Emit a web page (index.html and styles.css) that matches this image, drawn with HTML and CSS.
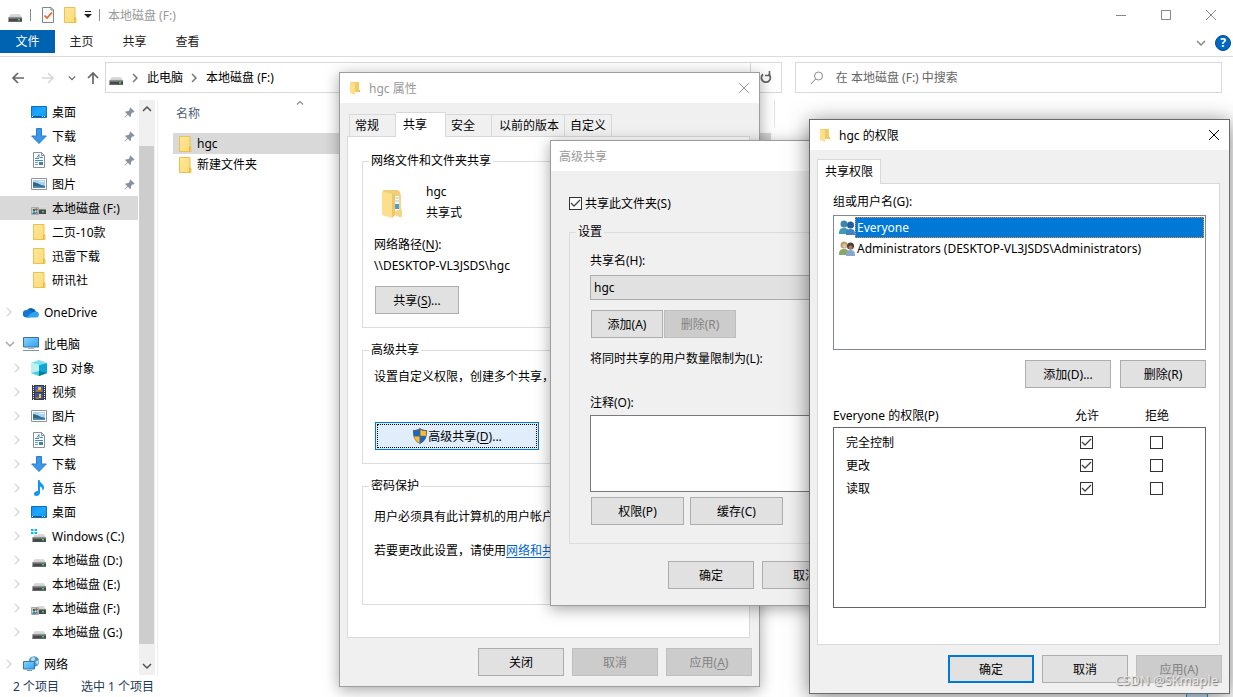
FILE: index.html
```html
<!DOCTYPE html>
<html lang="zh-CN">
<head>
<meta charset="utf-8">
<title>本地磁盘 (F:)</title>
<link rel="stylesheet" href="styles.css">
</head>
<body>
<svg class="sprite" aria-hidden="true">
  <defs>
    <linearGradient id="g-folder" x1="0" y1="0" x2="1" y2="1"><stop offset="0" stop-color="#ffe79b"/><stop offset="1" stop-color="#fbdb76"/></linearGradient>
    <linearGradient id="g-blue" x1="0" y1="0" x2="1" y2="1"><stop offset="0" stop-color="#0a93f5"/><stop offset=".5" stop-color="#22a7ff"/><stop offset="1" stop-color="#0f97f8"/></linearGradient>
    <linearGradient id="g-pc" x1="0" y1="0" x2="1" y2="1"><stop offset="0" stop-color="#8fd3fb"/><stop offset="1" stop-color="#2ba3f2"/></linearGradient>
    <linearGradient id="g-drive" x1="0" y1="0" x2="0" y2="1"><stop offset="0" stop-color="#dfe0e1"/><stop offset="1" stop-color="#c4c6c8"/></linearGradient>
  </defs>
  <symbol id="folder" viewBox="0 0 16 16"><path d="M2.500.5h10.500v11h1v4H2.500z" fill="url(#g-folder)" stroke="#e8c14e"/><path d="M12.500 15.500v-4.500h1.500" fill="none" stroke="#e8b93c"/></symbol>
  <symbol id="folder-open" viewBox="0 0 12 14"><path d="M1 1h9v10H1z" fill="#f3cc68"/><path d="M1 1l5 1.500V14l-5-2z" fill="#ffe08a"/><path d="M7 11h4v-2h-1v2z" fill="#eebb4d"/></symbol>
  <symbol id="folder-big" viewBox="0 0 22 30"><path d="M2 1h15l2 2v23H2z" fill="#efcf77"/><path d="M13 7h6v15h-6z" fill="#f3f6f8"/><path d="M14 9h4M14 12h4" stroke="#b7cddb"/><path d="M14 15h4v5h-4z" fill="#4d9ed8"/><path d="M1 2l10 3v24L1 26z" fill="#fbdf8c"/><path d="M11 5l3 1v20l-3 3z" fill="#ecc763"/><path d="M14 22l4-1V5h2v15l1 1v7h-3l-4-2z" fill="#f5d783"/></symbol>
  <symbol id="drive" viewBox="0 0 16 16"><path d="M3.500 7h9.500l2 4H1.500z" fill="url(#g-drive)"/><path d="M1.500 10.500H15V15H1.500z" fill="#47494c"/><path d="M1.500 10.500H15v1H1.500z" fill="#95979a"/><path d="M1.500 14H15v1H1.500z" fill="#66696b"/><path d="M11 12h2v1.500h-2z" fill="#2fe04a"/></symbol>
  <symbol id="drive-win" viewBox="0 0 16 16"><path d="M4 6h9l2 4H2z" fill="url(#g-drive)"/><path d="M1.500 9.500H15V14H1.500z" fill="#47494c"/><path d="M1.500 9.500H15v1H1.500z" fill="#95979a"/><path d="M11 11h2v1.500h-2z" fill="#2fe04a"/><path d="M0 0h7v7H0z" fill="#fff"/><path d="M0 1h2.500v2H0zM3.500 1H6v2H3.500zM0 4h2.500v2H0zM3.500 4H6v2H3.500z" fill="#00bcf2"/></symbol>
  <symbol id="drive-share" viewBox="0 0 16 16"><path d="M7 6h6l2 4H7z" fill="url(#g-drive)"/><path d="M7 9.500h8V14H7z" fill="#47494c"/><path d="M11 11h2v1.500h-2z" fill="#2fe04a"/><path d="M.5 7.500h7v7h-7z" fill="#cfd6d5" stroke="#a4aaaa"/><circle cx="3" cy="10" r="1.300" fill="#356b4a"/><circle cx="5.500" cy="9.500" r="1.200" fill="#8a5a43"/><path d="M1 14l2-3 2 3zM4 13l2-2 1 3z" fill="#3d7b95"/></symbol>
  <symbol id="desktop" viewBox="0 0 16 16"><path d="M.5 2.500h15v11H.5z" fill="url(#g-blue)" stroke="#0b73bd"/><path d="M1 12h14v1H1z" fill="#0a5d9c"/><path d="M1 12h1v1H1zM11 12h1v1h-1zM13 12h1v1h-1z" fill="#fff"/></symbol>
  <symbol id="download" viewBox="0 0 16 16"><path d="M5.500.5h5v7.500h4.800L8 15.500.7 8h4.800z" fill="#3a96e8" stroke="#2b7cc9"/></symbol>
  <symbol id="document" viewBox="0 0 16 16"><path d="M2.500.5h8l3 3v12h-11z" fill="#fff" stroke="#8b8f93"/><path d="M10.500.5v3h3" fill="none" stroke="#8b8f93"/><path d="M6 5.500l2-3v3.500M4 6.500h4M9 5.500h3M4 8.500h8" stroke="#3b8fc8" fill="none"/><path d="M4 10.500h3M4 12.500h3" stroke="#7ba0bb"/><path d="M8 10h4v3H8z" fill="#3e86a8"/></symbol>
  <symbol id="picture" viewBox="0 0 16 16"><path d="M.5 2.500h15v11H.5z" fill="#fff" stroke="#8f9498"/><path d="M2 4h12v8H2z" fill="#a8d3f6"/><path d="M2 6l4 1 4 2 4 1v2H2z" fill="#35677a"/><path d="M2 10l6 .5 6 .5v1H2z" fill="#4d8fc4"/><path d="M8 5h5v1H8z" fill="#edf7ff"/></symbol>
  <symbol id="video" viewBox="0 0 16 16"><path d="M1 1h14v15H1z" fill="#3b3b3f"/><path d="M4 2h8v6H4z" fill="#3e63c4"/><path d="M4 9h8v6H4z" fill="#3157b4"/><path d="M7 3h3v3H7zM8 10h2v4H8z" fill="#f2c72d"/><path d="M5 6h6v2H5zM5 13h3v2H5z" fill="#a8732e"/><path d="M2.500 1v15M13.500 1v15" stroke="#f2f2f2" stroke-dasharray="1 1"/></symbol>
  <symbol id="music" viewBox="0 0 16 16"><path d="M7 0h1.500c.3 3 4.500 4 4.500 7.500 0 1.500-.7 2.500-1.500 3.500.3-2.500-.6-4-2.500-4.500v6c0 2-1.600 3.500-3.700 3.500C3.700 16 3 15 3 14c0-1.700 1.800-3.200 4-3z" fill="#1296f0"/></symbol>
  <symbol id="cube" viewBox="0 0 16 16"><path d="M8 0l8 3-8 2-8-2z" fill="#7be0ee"/><path d="M0 3l8 2v11l-8-3z" fill="#c0eff4"/><path d="M16 3L8 5v11l8-3z" fill="#08a9d6"/><path d="M0 13l8-2v5z" fill="#49cfe0"/><path d="M8 11l8 2-8 3z" fill="#077a9d"/></symbol>
  <symbol id="cloud" viewBox="0 0 16 16"><path d="M4 6.500A5 5 0 0 1 13 7.500L9 11z" fill="#0f63b5"/><path d="M3.500 13.500a3.500 3.500 0 0 1 0-7.500c2-.4 3.500 0 5 1.500l3 3-5 3z" fill="#1277d4"/><path d="M12.800 7.500a3 3 0 0 1 .2 6H3.500C6 11 9.500 7.500 12.800 7.500z" fill="#2ca5ec"/></symbol>
  <symbol id="pc" viewBox="0 0 16 16"><path d="M.5 1.500h15v9.500H.5z" fill="url(#g-pc)" stroke="#3a7196"/><path d="M5 12h6v1H5z" fill="#a7b7c2"/><path d="M0 14.500h16" stroke="#7b97a9"/></symbol>
  <symbol id="network" viewBox="0 0 16 16"><circle cx="11" cy="5.500" r="5.300" fill="#5497c2"/><path d="M8 3c2-3 4-2 4 0s-2 1-1 3-3 2-3-3zM12 6l4-2-1 5z" fill="#b9dced"/><path d="M.5 5.500h11V13H.5z" fill="url(#g-pc)" stroke="#347aa6"/><path d="M4 14.500h5" stroke="#7b97a9"/></symbol>
  <symbol id="pin" viewBox="0 0 12 12"><path d="M7 .5L11.500 5l-1 1-1-.2-2 2 .2 2.200-1 1-2.500-2.500L1 11.500.5 11l3-3.200L1.200 5.500l1-1 2.200.2 2-2L6 1.500z" fill="#8793a0"/></symbol>
  <symbol id="chev-right" viewBox="0 0 8 10"><path d="M2 1l4 4-4 4" fill="none" stroke="currentColor" stroke-width="1.500"/></symbol>
  <symbol id="chev-down" viewBox="0 0 10 8"><path d="M1 2l4 4 4-4" fill="none" stroke="currentColor" stroke-width="1.500"/></symbol>
  <symbol id="chev-up" viewBox="0 0 10 8"><path d="M1 6l4-4 4 4" fill="none" stroke="currentColor" stroke-width="1.500"/></symbol>
  <symbol id="arrow" viewBox="0 0 14 14"><path d="M13 7H2M7 2L2 7l5 5" fill="none" stroke="currentColor" stroke-width="1.700"/></symbol>
  <symbol id="close" viewBox="0 0 12 12"><path d="M1 1l10 10M11 1L1 11" fill="none" stroke="currentColor"/></symbol>
  <symbol id="shield" viewBox="0 0 16 16"><path d="M8 0c2 1.500 4 2 7 2 .3 6-1 11-7 14C2 13 .7 8 1 2c3 0 5-.5 7-2z" fill="#5d6468"/><path d="M7.500 1.700v6H2V3c2.500 0 4-.5 5.500-1.300zM8.500 8.500H14c-.6 3-2.500 5-5.500 6.500z" fill="#1668c7"/><path d="M8.500 1.700v6H14V3c-2.500 0-4-.5-5.500-1.300zM7.500 8.500H2c.6 3 2.500 5 5.500 6.500z" fill="#fbbc35"/></symbol>
  <symbol id="group-blue" viewBox="0 0 16 16"><circle cx="5" cy="4" r="3.500" fill="#3a87ae"/><path d="M0 14c0-4 1-6 5-6s5 2 5 6z" fill="#3f9ab0"/><circle cx="11.500" cy="5" r="3.500" fill="#245f9c"/><path d="M7 15c0-4 1-6 4.500-6s4.500 2 4.500 6z" fill="#3b82c7"/></symbol>
  <symbol id="group" viewBox="0 0 16 16"><circle cx="5" cy="4" r="3.500" fill="#b9a26d"/><circle cx="5.500" cy="5" r="2" fill="#e4c6a0"/><path d="M0 14c0-4 1-6 5-6s5 2 5 6z" fill="#86a86c"/><circle cx="11.500" cy="5" r="3.500" fill="#4a3f3a"/><circle cx="11.500" cy="6.500" r="2" fill="#a87b5f"/><path d="M7 15c0-4 1-6 4.500-6s4.500 2 4.500 6z" fill="#8ba7cc"/></symbol>
</svg>

<main class="explorer">
  <header class="titlebar">
    <svg class="icon"><use href="#drive"/></svg>
    <span class="bar"></span>
    <svg class="icon check-doc" viewBox="0 0 16 16"><path d="M2.500.5h8.500l2.500 2.500v12.500h-11z" fill="#f7f8f8" stroke="#838689"/><path d="M11 .5V3h2.500" fill="none" stroke="#838689"/><path d="M4.500 8.500l2.500 2.500 5-5.500" fill="none" stroke="#e8622a" stroke-width="1.700"/></svg>
    <svg class="icon"><use href="#folder"/></svg>
    <svg class="qat-more" viewBox="0 0 8 8"><path d="M1 .5h6" stroke="#222"/><path d="M0 3h8L4 7z" fill="#222"/></svg>
    <span class="bar"></span>
    <h1 class="window-title">本地磁盘 (F:)</h1>
    <div class="window-buttons">
      <button class="window-button" aria-label="最小化"><svg viewBox="0 0 12 12"><path d="M1 6.500h10" stroke="currentColor"/></svg></button>
      <button class="window-button" aria-label="最大化"><svg viewBox="0 0 12 12"><path d="M1.500 1.500h9v9h-9z" fill="none" stroke="currentColor"/></svg></button>
      <button class="window-button" aria-label="关闭"><svg><use href="#close"/></svg></button>
    </div>
  </header>

  <nav class="ribbon" aria-label="功能区">
    <button class="ribbon-tab ribbon-file">文件</button>
    <button class="ribbon-tab">主页</button>
    <button class="ribbon-tab">共享</button>
    <button class="ribbon-tab">查看</button>
    <div class="ribbon-end">
      <svg class="chev-down"><use href="#chev-down"/></svg>
      <button class="help" aria-label="帮助">?</button>
    </div>
  </nav>

  <div class="toolbar">
    <div class="history">
      <button class="plain" aria-label="后退"><svg class="arrow"><use href="#arrow"/></svg></button>
      <button class="plain faint" aria-label="前进"><svg class="arrow flip"><use href="#arrow"/></svg></button>
      <button class="plain" aria-label="最近"><svg class="recent"><use href="#chev-down"/></svg></button>
      <button class="plain" aria-label="上移"><svg class="arrow up"><use href="#arrow"/></svg></button>
    </div>
    <div class="address">
      <svg class="icon"><use href="#drive"/></svg>
      <svg class="crumb-sep"><use href="#chev-right"/></svg>
      <button class="plain crumb">此电脑</button>
      <svg class="crumb-sep"><use href="#chev-right"/></svg>
      <button class="plain crumb">本地磁盘 (F:)</button>
      <button class="plain refresh" aria-label="刷新"><svg viewBox="0 0 14 14"><path d="M4 3.200A4.500 4.500 0 1 0 9.500 3" fill="none" stroke="#666" stroke-width="1.800"/><path d="M3.500 0v4.500H8" fill="none" stroke="#666" stroke-width="1.600" transform="matrix(-1 0 0 1 13 0) translate(-1 0)"/></svg></button>
    </div>
    <label class="search">
      <svg viewBox="0 0 14 14"><circle cx="8.500" cy="5" r="4" fill="none" stroke="#888"/><path d="M5.500 8L1 13" stroke="#888"/></svg>
      <input type="search" placeholder="在 本地磁盘 (F:) 中搜索" aria-label="搜索">
    </label>
  </div>

  <div class="content">
    <nav class="tree" aria-label="导航窗格">
      <ul class="tree-list">
        <li><a class="node" href="#"><svg class="icon"><use href="#desktop"/></svg>桌面<svg class="pin"><use href="#pin"/></svg></a></li>
        <li><a class="node" href="#"><svg class="icon"><use href="#download"/></svg>下载<svg class="pin"><use href="#pin"/></svg></a></li>
        <li><a class="node" href="#"><svg class="icon"><use href="#document"/></svg>文档<svg class="pin"><use href="#pin"/></svg></a></li>
        <li><a class="node" href="#"><svg class="icon"><use href="#picture"/></svg>图片<svg class="pin"><use href="#pin"/></svg></a></li>
        <li><a class="node selected" href="#"><svg class="icon"><use href="#drive-share"/></svg>本地磁盘 (F:)</a></li>
        <li><a class="node" href="#"><svg class="icon"><use href="#folder"/></svg>二页-10款</a></li>
        <li><a class="node" href="#"><svg class="icon"><use href="#folder"/></svg>迅雷下载</a></li>
        <li><a class="node" href="#"><svg class="icon"><use href="#folder"/></svg>研讯社</a></li>
      </ul>
      <ul class="tree-list">
        <li><a class="node root" href="#"><svg class="twist"><use href="#chev-right"/></svg><svg class="icon"><use href="#cloud"/></svg>OneDrive</a></li>
      </ul>
      <ul class="tree-list">
        <li><a class="node root" href="#"><svg class="twist open"><use href="#chev-down"/></svg><svg class="icon"><use href="#pc"/></svg>此电脑</a></li>
        <li><a class="node child" href="#"><svg class="twist"><use href="#chev-right"/></svg><svg class="icon"><use href="#cube"/></svg>3D 对象</a></li>
        <li><a class="node child" href="#"><svg class="twist"><use href="#chev-right"/></svg><svg class="icon"><use href="#video"/></svg>视频</a></li>
        <li><a class="node child" href="#"><svg class="twist"><use href="#chev-right"/></svg><svg class="icon"><use href="#picture"/></svg>图片</a></li>
        <li><a class="node child" href="#"><svg class="twist"><use href="#chev-right"/></svg><svg class="icon"><use href="#document"/></svg>文档</a></li>
        <li><a class="node child" href="#"><svg class="twist"><use href="#chev-right"/></svg><svg class="icon"><use href="#download"/></svg>下载</a></li>
        <li><a class="node child" href="#"><svg class="twist"><use href="#chev-right"/></svg><svg class="icon"><use href="#music"/></svg>音乐</a></li>
        <li><a class="node child" href="#"><svg class="twist"><use href="#chev-right"/></svg><svg class="icon"><use href="#desktop"/></svg>桌面</a></li>
        <li><a class="node child" href="#"><svg class="twist"><use href="#chev-right"/></svg><svg class="icon"><use href="#drive-win"/></svg>Windows (C:)</a></li>
        <li><a class="node child" href="#"><svg class="twist"><use href="#chev-right"/></svg><svg class="icon"><use href="#drive"/></svg>本地磁盘 (D:)</a></li>
        <li><a class="node child" href="#"><svg class="twist"><use href="#chev-right"/></svg><svg class="icon"><use href="#drive"/></svg>本地磁盘 (E:)</a></li>
        <li><a class="node child" href="#"><svg class="twist"><use href="#chev-right"/></svg><svg class="icon"><use href="#drive-share"/></svg>本地磁盘 (F:)</a></li>
        <li><a class="node child" href="#"><svg class="twist"><use href="#chev-right"/></svg><svg class="icon"><use href="#drive"/></svg>本地磁盘 (G:)</a></li>
      </ul>
      <ul class="tree-list">
        <li><a class="node root" href="#"><svg class="twist"><use href="#chev-right"/></svg><svg class="icon"><use href="#network"/></svg>网络</a></li>
      </ul>
    </nav>
    <div class="scrollbar" aria-hidden="true">
      <svg class="scroll-arrow"><use href="#chev-up"/></svg>
      <span class="thumb"></span>
      <svg class="scroll-arrow"><use href="#chev-down"/></svg>
    </div>
    <section class="files">
      <div class="column-head"><svg class="sort"><use href="#chev-up"/></svg><button class="plain column-name">名称</button></div>
      <ul class="file-list">
        <li><a class="file selected" href="#"><svg class="icon"><use href="#folder"/></svg>hgc</a></li>
        <li><a class="file" href="#"><svg class="icon"><use href="#folder"/></svg>新建文件夹</a></li>
      </ul>
    </section>
  </div>

  <footer class="status">
    <span>2 个项目</span>
    <span>选中 1 个项目</span>
    <button class="view-mode" aria-label="详细信息"></button>
  </footer>
</main>

<section class="dialog dialog-props" role="dialog" aria-labelledby="t-props">
  <header class="dialog-title">
    <svg class="dialog-icon"><use href="#folder-open"/></svg>
    <h2 id="t-props">hgc 属性</h2>
    <button class="dialog-close" aria-label="关闭"><svg><use href="#close"/></svg></button>
  </header>
  <div class="tabs" role="tablist">
    <button class="tab" role="tab">常规</button>
    <button class="tab active" role="tab" aria-selected="true">共享</button>
    <button class="tab" role="tab">安全</button>
    <button class="tab" role="tab">以前的版本</button>
    <button class="tab" role="tab">自定义</button>
  </div>
  <div class="panel panel-props">
    <fieldset class="group group-share">
      <legend>网络文件和文件夹共享</legend>
      <div class="share-head">
        <svg class="folder-big"><use href="#folder-big"/></svg>
        <div><p>hgc</p><p>共享式</p></div>
      </div>
      <p class="path-label">网络路径(<u>N</u>):</p>
      <p>\\DESKTOP-VL3JSDS\hgc</p>
      <button class="btn btn-share">共享(<u>S</u>)...</button>
    </fieldset>
    <fieldset class="group group-advanced">
      <legend>高级共享</legend>
      <p>设置自定义权限，创建多个共享，</p>
      <button class="btn btn-advanced"><svg class="icon"><use href="#shield"/></svg>高级共享(<u>D</u>)...</button>
    </fieldset>
    <fieldset class="group group-password">
      <legend>密码保护</legend>
      <p>用户必须具有此计算机的用户帐户</p>
      <p>若要更改此设置，请使用<a class="link" href="#">网络和共享中心</a></p>
    </fieldset>
  </div>
  <div class="actions">
    <button class="btn">关闭</button>
    <button class="btn" disabled>取消</button>
    <button class="btn" disabled>应用(<u>A</u>)</button>
  </div>
</section>

<section class="dialog dialog-advanced" role="dialog" aria-labelledby="t-adv">
  <header class="dialog-title">
    <h2 id="t-adv">高级共享</h2>
  </header>
  <div class="advanced-body">
    <label class="check-row"><input class="check" type="checkbox" checked>共享此文件夹(S)</label>
    <fieldset class="group group-settings">
      <legend>设置</legend>
      <label class="field-label" for="share-name">共享名(H):</label>
      <select class="combo" id="share-name"><option>hgc</option></select>
      <div class="name-buttons">
        <button class="btn">添加(A)</button>
        <button class="btn" disabled>删除(R)</button>
      </div>
      <p class="limit">将同时共享的用户数量限制为(L):</p>
      <label class="field-label" for="note">注释(O):</label>
      <textarea class="note" id="note"></textarea>
      <div class="share-buttons">
        <button class="btn">权限(P)</button>
        <button class="btn">缓存(C)</button>
      </div>
    </fieldset>
    <div class="advanced-actions">
      <button class="btn">确定</button>
      <button class="btn">取消</button>
      <button class="btn">应用</button>
    </div>
  </div>
</section>

<section class="dialog dialog-perms" role="dialog" aria-labelledby="t-perms">
  <header class="dialog-title">
    <svg class="dialog-icon"><use href="#folder-open"/></svg>
    <h2 id="t-perms">hgc 的权限</h2>
    <button class="dialog-close" aria-label="关闭"><svg><use href="#close"/></svg></button>
  </header>
  <div class="tabs tabs-flush" role="tablist">
    <button class="tab active" role="tab" aria-selected="true">共享权限</button>
  </div>
  <div class="panel panel-perms">
    <p id="l-users">组或用户名(G):</p>
    <ul class="users" role="listbox" aria-labelledby="l-users">
      <li class="user" role="option" aria-selected="true"><svg class="icon"><use href="#group-blue"/></svg><span class="user-name chosen">Everyone</span></li>
      <li class="user" role="option"><svg class="icon"><use href="#group"/></svg><span class="user-name">Administrators (DESKTOP-VL3JSDS\Administrators)</span></li>
    </ul>
    <div class="user-buttons">
      <button class="btn">添加(D)...</button>
      <button class="btn">删除(R)</button>
    </div>
    <table class="perms">
      <thead>
        <tr><th scope="col">Everyone 的权限(P)</th><th scope="col">允许</th><th scope="col">拒绝</th></tr>
      </thead>
      <tbody>
        <tr><td>完全控制</td><td><input class="check" type="checkbox" checked aria-label="允许完全控制"></td><td><input class="check" type="checkbox" aria-label="拒绝完全控制"></td></tr>
        <tr><td>更改</td><td><input class="check" type="checkbox" checked aria-label="允许更改"></td><td><input class="check" type="checkbox" aria-label="拒绝更改"></td></tr>
        <tr><td>读取</td><td><input class="check" type="checkbox" checked aria-label="允许读取"></td><td><input class="check" type="checkbox" aria-label="拒绝读取"></td></tr>
      </tbody>
    </table>
  </div>
  <div class="actions">
    <button class="btn btn-default">确定</button>
    <button class="btn">取消</button>
    <button class="btn" disabled>应用(A)</button>
  </div>
</section>

<p class="watermark">CSDN @SKmaple</p>
</body>
</html>
```

FILE: styles.css
```css
* { box-sizing: border-box; }

body {
  margin: 0;
  background: #fff;
  color: #000;
  font: 12px/21px "Noto Sans", "Noto Sans CJK SC", sans-serif;
}

h1, h2, p, ul { margin: 0; padding: 0; font-size: 12px; font-weight: 400; }
ul { list-style: none; }
svg { display: block; flex: none; }
button, input, select, textarea { font: inherit; color: inherit; margin: 0; }
a { color: inherit; text-decoration: none; }
u { text-underline-offset: 2px; }

.sprite { position: absolute; width: 0; height: 0; }
.icon { width: 16px; height: 16px; }

.plain { display: flex; align-items: center; border: 0; padding: 0; background: none; }

/* Explorer window */
.explorer { display: flex; flex-direction: column; height: 100vh; overflow: hidden; }

.titlebar { display: flex; align-items: center; height: 30px; padding-left: 7px; flex: none; }
.titlebar .bar { width: 1px; height: 12px; margin: 0 9px 0 7px; background: #8a8a8a; }
.check-doc { margin-right: 6px; }
.qat-more { width: 8px; height: 8px; margin-left: 6px; }
.window-title { color: #999; }
.titlebar .window-title { margin-left: -1px; }
.window-buttons { display: flex; margin-left: auto; color: #888; }
.window-button { display: grid; place-items: center; width: 45px; height: 28px; padding: 0; border: 0; background: none; }
.window-button svg { width: 12px; height: 12px; }

.ribbon { display: flex; align-items: flex-start; height: 27px; border-bottom: 1px solid #dadbdc; flex: none; }
.ribbon-tab { width: 53px; height: 23px; padding: 0; border: 0; background: none; color: #222; line-height: 23px; }
.ribbon-file { width: 55px; background: #0063b1; color: #fff; }
.ribbon-end { display: flex; align-items: center; gap: 9px; margin: 5px 2px 0 auto; color: #888; }
.chev-down { width: 10px; height: 8px; }
.help { width: 16px; height: 16px; padding: 0; border: 1px solid #004e8c; border-radius: 50%; background: #0067c5; color: #fff; font-weight: 700; line-height: 14px; }

.toolbar { display: flex; padding: 5px 11px 7px; flex: none; }
.history { display: flex; align-items: center; width: 94px; gap: 13px; color: #666; }
.history .faint { margin-left: 3px; color: #d8d8d8; }
.arrow { width: 14px; height: 14px; }
.flip { transform: scaleX(-1); }
.up { transform: rotate(90deg); }
.recent { width: 8px; height: 8px; }
.history .plain:last-child { margin-left: -3px; }
.address { display: flex; align-items: center; flex: 18 1 0; height: 31px; margin-right: 13px; padding-left: 2px; border: 1px solid #d9d9d9; }
.crumb-sep { width: 8px; height: 10px; margin: 0 8px 0 7px; color: #777; }
.crumb { line-height: 28px; }
.refresh { justify-content: center; align-self: stretch; width: 31px; margin-left: auto; border-left: 1px solid #d9d9d9; }
.refresh svg { width: 14px; height: 14px; }
.search { display: flex; align-items: center; gap: 12px; flex: 11 1 0; min-width: 0; height: 31px; padding-left: 14px; border: 1px solid #d9d9d9; }
.search svg { width: 14px; height: 14px; }
.search input { flex: 1; min-width: 0; padding: 0; border: 0; outline: 0; background: none; }
.search input::placeholder { color: #666; opacity: 1; }

.content { display: flex; flex: 1; min-height: 0; }
.tree { width: 138px; flex: none; overflow: hidden; }
.tree-list { margin-bottom: 8px; }
.node { display: flex; align-items: center; gap: 5px; height: 24px; padding-left: 31px; white-space: nowrap; }
.node.root { padding-left: 5px; }
.node.child { padding-left: 13px; }
.selected { background: #d9d9d9; }
.twist { width: 8px; height: 10px; margin-right: 5px; color: #d8d8d8; }
.twist.open { width: 10px; height: 8px; margin-right: 3px; color: #a6a6a6; }
.pin { width: 11px; height: 11px; margin: 0 3px 0 auto; }

.scrollbar { display: flex; flex-direction: column; width: 16px; margin: 0 2px 1px 1px; background: #f0f0f0; flex: none; color: #505050; }
.scroll-arrow { width: 10px; height: 8px; margin: 5px auto; }
.scrollbar .scroll-arrow:first-child { margin-bottom: 33px; }
.scrollbar .scroll-arrow:last-child { margin: 18px auto 5px; }
.thumb { flex: 1; width: 15px; background: #cdcdcd; }

.files { flex: 1; min-width: 0; padding-left: 15px; border-left: 1px solid #f0f0f0; }
.column-head { width: 602px; height: 27px; margin-bottom: 6px; border-right: 1px solid #e5e5e5; }
.sort { width: 10px; height: 6px; margin: 0 0 0 122px; color: #888; }
.column-name { padding-left: 3px; line-height: 16px; color: #4c607a; }
.file-list { width: 598px; }
.file { display: flex; align-items: center; gap: 4px; height: 21px; padding-left: 4px; }

.status { display: flex; gap: 22px; height: 21px; padding-left: 13px; color: #1e395b; flex: none; }
.view-mode { align-self: flex-end; width: 22px; height: 4px; margin: 0 25px 0 auto; padding: 0; border: 1px solid #26a0da; border-bottom: 0; background: #cce8ff; }

/* Shared dialog parts */
.dialog { position: absolute; border: 1px solid #9d9d9d; background: #f0f0f0; box-shadow: 0 3px 14px rgba(0, 0, 0, .35); }
.dialog-title { display: flex; align-items: center; height: 30px; padding-left: 9px; background: #fff; color: #999; }
.dialog-icon { width: 12px; height: 14px; margin-right: 8px; }
.dialog-close { display: grid; place-items: center; width: 30px; height: 30px; margin-left: auto; padding: 0; border: 0; background: none; }
.dialog-close svg { width: 12px; height: 12px; }

.tabs { display: flex; align-items: flex-end; margin: 9px 9px 0; }
.tabs-flush { margin-left: 7px; }
.tab { height: 22px; padding: 0 5px; border: 1px solid #d9d9d9; border-width: 1px 1px 0 0; background: #f0f0f0; line-height: 21px; white-space: nowrap; }
.tab:first-child { border-left-width: 1px; padding-right: 16px; }
.tab:nth-child(3) { padding-right: 16px; }
.tab:nth-child(4) { padding-left: 7px; }
.tab.active { position: relative; z-index: 1; height: 25px; margin-bottom: -1px; padding: 0 18px 2px 7px; background: #fff; }
.tabs-flush .tab.active { padding: 0 7px 2px; }

.panel { margin: 0 9px 0 7px; border: 1px solid #d9d9d9; background: #fff; }
.actions { display: flex; justify-content: flex-end; gap: 8px; padding: 10px 7px; }

.btn { display: flex; align-items: center; justify-content: center; width: 86px; height: 28px; padding: 0; border: 1px solid #adadad; background: #e1e1e1; white-space: nowrap; }
.btn:disabled { border-color: #bfbfbf; background: #ccc; color: #838383; }
.btn-default { border: 2px solid #0078d7; }

.group { min-width: 0; margin: 0; padding: 0 11px; border: 1px solid #dcdcdc; }
.group legend { margin-left: -5px; padding: 0 2px; line-height: 16px; }

.check { appearance: none; display: block; width: 13px; height: 13px; border: 1px solid #333; background: #fff; flex: none; }
.check:checked { background: #fff url("data:image/svg+xml,%3Csvg xmlns='http://www.w3.org/2000/svg' viewBox='0 0 11 11'%3E%3Cpath d='M1 5l3 3 6-6' fill='none' stroke='%23444' stroke-width='1.300'/%3E%3C/svg%3E"); }

/* Properties dialog */
.dialog-props { left: 339px; top: 72px; width: 421px; }
.panel-props { padding: 16px 13px 32px 14px; }
.group-share { padding-top: 12px; padding-bottom: 13px; }
.share-head { display: flex; gap: 23px; margin-bottom: 11px; padding-left: 7px; }
.folder-big { width: 22px; height: 30px; margin-top: 8px; }
.btn-share { width: 84px; margin: 10px 0 0 1px; }
.group-advanced { margin-top: 14px; padding-top: 8px; padding-bottom: 13px; }
.btn-advanced { width: 164px; margin: 35px 0 0 1px; border-color: #0078d7; background: #e0eefb; outline: 1px dotted #000; outline-offset: -3px; }
.group-password { margin-top: 14px; padding-top: 12px; padding-bottom: 43px; }
.group-password p + p { margin-top: 13px; }
.link { color: #0066cc; text-decoration: underline; text-underline-offset: 2px; }

/* Advanced sharing dialog */
.dialog-advanced { left: 550px; top: 140px; width: 405px; }
.dialog-advanced .dialog-title { padding-left: 8px; }
.advanced-body { padding: 22px 12px 16px 18px; }
.check-row { display: flex; align-items: center; gap: 3px; margin-bottom: 10px; }
.group-settings { padding: 10px 20px 18px; }
.group-settings legend { margin-left: -14px; }
.field-label { display: block; }
.combo { appearance: none; display: block; width: 100%; height: 25px; margin-top: 4px; padding: 0 3px; border: 1px solid #adadad; border-radius: 0; background: #e1e1e1; }
.name-buttons { display: flex; gap: 1px; margin: 10px 1px; }
.name-buttons .btn { width: 72px; }
.limit { margin-bottom: 23px; }
.note { display: block; width: 100%; height: 77px; margin-top: 2px; border: 1px solid #7a7a7a; background: #fff; resize: none; }
.share-buttons { display: flex; gap: 6px; margin: 5px 1px 0; }
.share-buttons .btn { width: 93px; }
.advanced-actions { display: flex; justify-content: flex-end; gap: 8px; margin-top: 17px; }

/* Permissions dialog */
.dialog-perms { left: 809px; top: 119px; width: 421px; border-color: #6a6a6a; box-shadow: 0 3px 20px rgba(0, 0, 0, .5); }
.dialog-perms .dialog-title { color: #000; }
.panel-perms { padding: 7px 13px 36px 15px; }
.users { height: 135px; margin: 3px 0 10px; padding: 1px; border: 1px solid #828790; }
.user { display: flex; align-items: center; height: 21px; padding-left: 4px; }
.user-name { flex: 1; padding-left: 2px; line-height: 21px; white-space: nowrap; }
.chosen { background: #0078d7; color: #fff; outline: 1px dotted #ff8728; outline-offset: -1px; }
.user-buttons { display: flex; justify-content: flex-end; gap: 9px; margin-bottom: 17px; }
.perms, .perms thead, .perms tbody { display: block; }
.perms tr { display: grid; grid-template-columns: 1fr 70px 70px; align-items: center; justify-items: center; padding-right: 14px; }
.perms th, .perms td { padding: 0; font-weight: 400; }
.perms th:first-child, .perms td:first-child { justify-self: start; }
.perms tbody { height: 181px; margin-top: 1px; padding-top: 3px; border: 1px solid #646464; }
.perms tbody tr { height: 23px; padding-left: 12px; }

.watermark { position: absolute; right: 15px; bottom: 6px; color: #e6e6e6; font-size: 13px; text-shadow: 1px 1px 1px #777; }
```
